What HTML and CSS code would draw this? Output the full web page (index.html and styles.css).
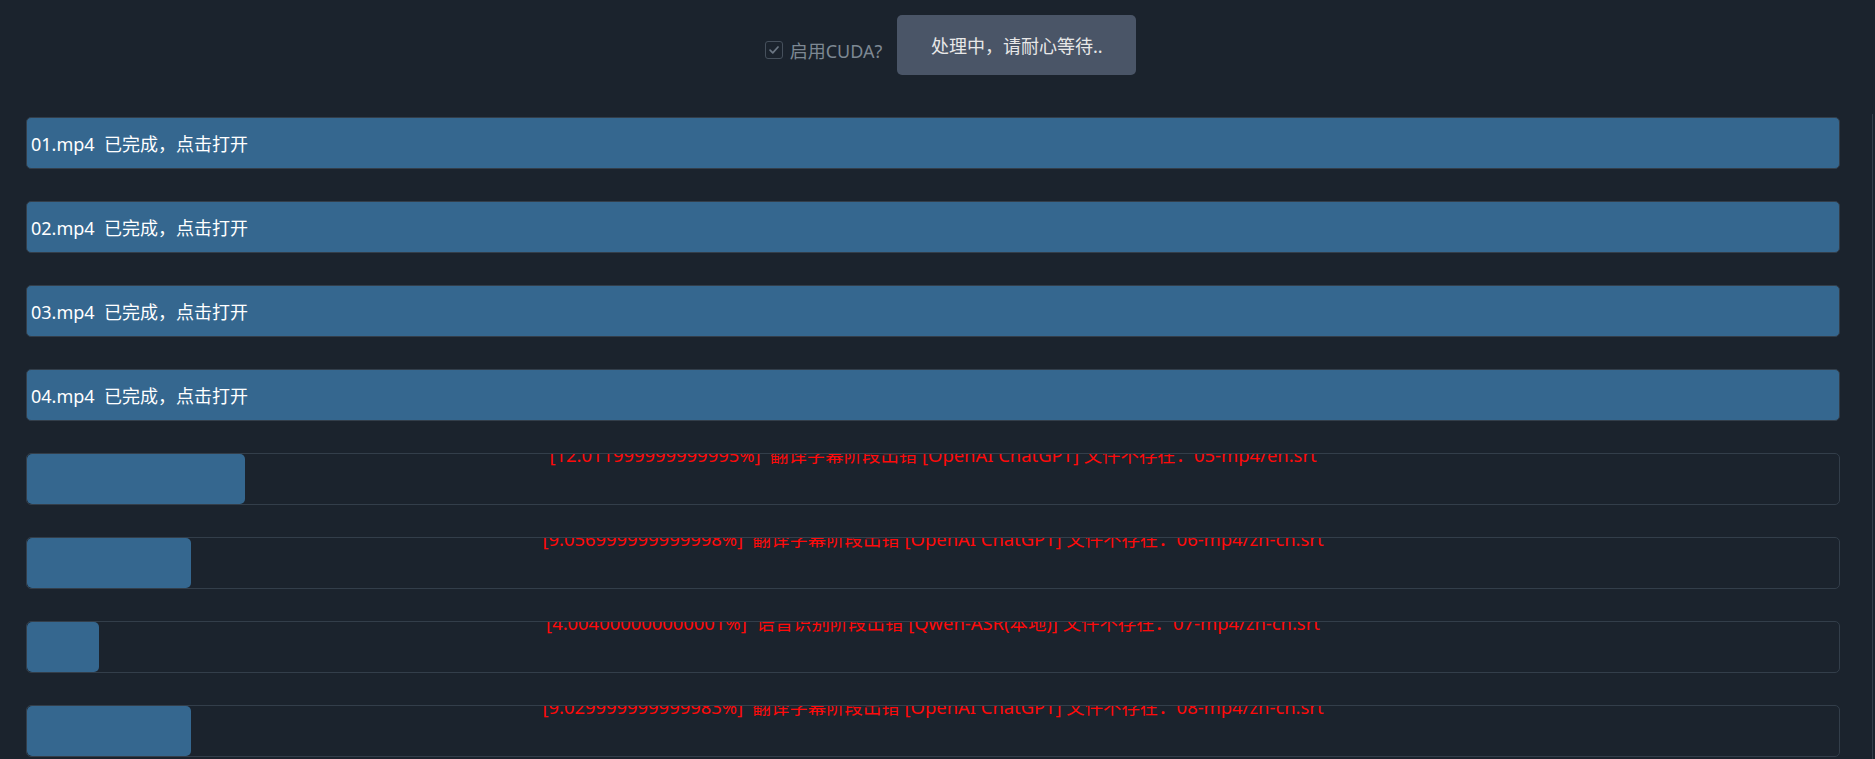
FILE: index.html
```html
<!DOCTYPE html>
<html lang="zh-CN">
<head>
    <meta charset="UTF-8">
    <meta name="viewport" content="width=device-width, initial-scale=1.0">
    <title>批量处理</title>
    <link rel="stylesheet" href="styles.css">
</head>
<body>
    <div id="toolbar">
        <label class="cuda-check">
            <span class="check-box">
                <svg viewBox="0 0 16 16" width="14" height="14"><path d="M3.5 8.2 L6.6 11.2 L12.6 4.6" fill="none" stroke="#6b7683" stroke-width="2" stroke-linecap="round" stroke-linejoin="round"/></svg>
            </span>
            启用CUDA?
        </label>
        <button id="start-button">处理中，请耐心等待..</button>
    </div>

    <div id="task-list">
        <div class="task done"><span class="task-name">01.mp4&nbsp;&nbsp;已完成，点击打开</span></div>
        <div class="task done"><span class="task-name">02.mp4&nbsp;&nbsp;已完成，点击打开</span></div>
        <div class="task done"><span class="task-name">03.mp4&nbsp;&nbsp;已完成，点击打开</span></div>
        <div class="task done"><span class="task-name">04.mp4&nbsp;&nbsp;已完成，点击打开</span></div>
        <div class="task">
            <div class="task-fill" style="width: 12.01%;"></div>
            <div class="task-error">[12.011999999999995%]&nbsp;&nbsp;翻译字幕阶段出错 [OpenAI ChatGPT] 文件不存在：05-mp4/en.srt</div>
        </div>
        <div class="task">
            <div class="task-fill" style="width: 9.06%;"></div>
            <div class="task-error">[9.056999999999998%]&nbsp;&nbsp;翻译字幕阶段出错 [OpenAI ChatGPT] 文件不存在：06-mp4/zh-cn.srt</div>
        </div>
        <div class="task">
            <div class="task-fill" style="width: 4.0%;"></div>
            <div class="task-error">[4.004000000000001%]&nbsp;&nbsp;语音识别阶段出错 [Qwen-ASR(本地)] 文件不存在：07-mp4/zh-cn.srt</div>
        </div>
        <div class="task">
            <div class="task-fill" style="width: 9.03%;"></div>
            <div class="task-error">[9.029999999999983%]&nbsp;&nbsp;翻译字幕阶段出错 [OpenAI ChatGPT] 文件不存在：08-mp4/zh-cn.srt</div>
        </div>
    </div>
</body>
</html>
```

FILE: styles.css
```css
body {
    font-family: "Noto Sans", "Noto Sans CJK SC", sans-serif;
    background-color: #1b232d;
    color: white;
    margin: 0;
    padding: 0;
}

#toolbar {
    display: flex;
    justify-content: center;
    align-items: center;
    gap: 15px;
    padding: 15px 0 0 26px;
    height: 99px;
    box-sizing: border-box;
}

.cuda-check {
    display: flex;
    align-items: center;
    gap: 7px;
    color: #7d8893;
    font-size: 18px;
    margin-bottom: 15px;
}

.check-box {
    width: 16px;
    height: 16px;
    border: 1px solid #46505c;
    border-radius: 3px;
    display: flex;
    align-items: center;
    justify-content: center;
}

#start-button {
    background-color: #4a5567;
    color: #e8e8e8;
    border: none;
    border-radius: 5px;
    width: 239px;
    height: 60px;
    font-family: inherit;
    font-size: 18px;
    cursor: pointer;
    margin-bottom: 24px;
}

#task-list {
    margin: 15px 2px 0 26px;
    padding: 3px 32px 0 0;
    border-right: 1px solid #343e49;
    height: 642px;
    display: flex;
    flex-direction: column;
    gap: 32px;
}

.task {
    position: relative;
    height: 52px;
    flex-shrink: 0;
    box-sizing: border-box;
    border: 1px solid #333e4a;
    border-radius: 5px;
    overflow: hidden;
}

.task.done {
    background-color: #35678f;
    display: flex;
    align-items: center;
    cursor: pointer;
}

.task-name {
    font-size: 18px;
    padding-left: 4px;
}

.task-fill {
    height: 100%;
    background-color: #35678f;
    border-radius: 5px;
}

/* error text sits over the bar, clipped at its top edge */
.task-error {
    position: absolute;
    top: -11px;
    left: 0;
    right: 0;
    text-align: center;
    color: #ff0a0a;
    font-size: 18.4px;
    line-height: 24px;
    white-space: nowrap;
}
```
